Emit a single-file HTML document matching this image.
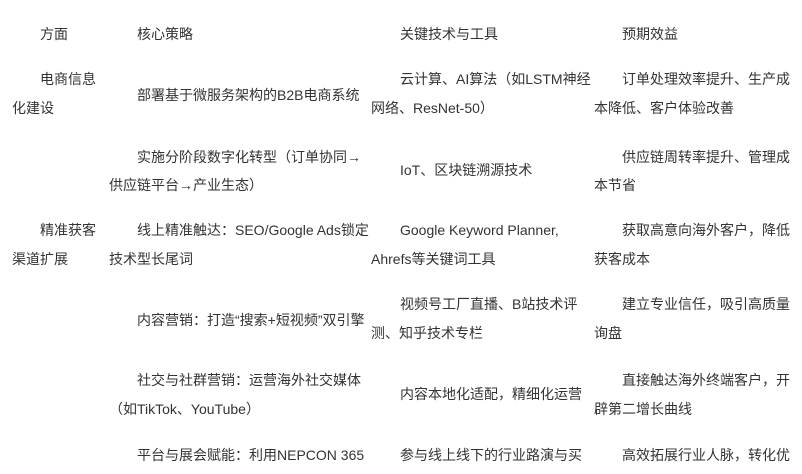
<!DOCTYPE html>
<html><head><meta charset="utf-8">
<style>
html,body{margin:0;padding:0;background:#fff;width:802px;height:474px;overflow:hidden;}
body{position:relative;font-family:"Liberation Sans","Noto Sans CJK SC",sans-serif;font-size:14px;color:#333;}
.t{position:absolute;white-space:nowrap;line-height:20px;}
</style></head><body>
<div class="t" style="left:40px;top:24px">方面</div>
<div class="t" style="left:137px;top:24px">核心策略</div>
<div class="t" style="left:400px;top:24px">关键技术与工具</div>
<div class="t" style="left:622px;top:24px">预期效益</div>

<div class="t" style="left:40px;top:69px">电商信息</div>
<div class="t" style="left:12px;top:98px">化建设</div>
<div class="t" style="left:137px;top:85px">部署基于微服务架构的B2B电商系统</div>
<div class="t" style="left:400px;top:69px">云计算、AI算法（如LSTM神经</div>
<div class="t" style="left:371px;top:98px">网络、ResNet-50）</div>
<div class="t" style="left:622px;top:69px">订单处理效率提升、生产成</div>
<div class="t" style="left:594px;top:98px">本降低、客户体验改善</div>

<div class="t" style="left:137px;top:147px">实施分阶段数字化转型（订单协同→</div>
<div class="t" style="left:109px;top:175px">供应链平台→产业生态）</div>
<div class="t" style="left:400px;top:160px">IoT、区块链溯源技术</div>
<div class="t" style="left:622px;top:147px">供应链周转率提升、管理成</div>
<div class="t" style="left:594px;top:175px">本节省</div>

<div class="t" style="left:40px;top:220px">精准获客</div>
<div class="t" style="left:12px;top:249px">渠道扩展</div>
<div class="t" style="left:137px;top:220px">线上精准触达：SEO/Google Ads锁定</div>
<div class="t" style="left:109px;top:249px">技术型长尾词</div>
<div class="t" style="left:400px;top:220px">Google Keyword Planner,</div>
<div class="t" style="left:371px;top:249px">Ahrefs等关键词工具</div>
<div class="t" style="left:622px;top:220px">获取高意向海外客户，降低</div>
<div class="t" style="left:594px;top:249px">获客成本</div>

<div class="t" style="left:137px;top:310px">内容营销：打造“搜索+短视频”双引擎</div>
<div class="t" style="left:400px;top:294px">视频号工厂直播、B站技术评</div>
<div class="t" style="left:371px;top:323px">测、知乎技术专栏</div>
<div class="t" style="left:622px;top:294px">建立专业信任，吸引高质量</div>
<div class="t" style="left:594px;top:323px">询盘</div>

<div class="t" style="left:137px;top:370px">社交与社群营销：运营海外社交媒体</div>
<div class="t" style="left:109px;top:399px">（如TikTok、YouTube）</div>
<div class="t" style="left:400px;top:384px">内容本地化适配，精细化运营</div>
<div class="t" style="left:622px;top:370px">直接触达海外终端客户，开</div>
<div class="t" style="left:594px;top:399px">辟第二增长曲线</div>

<div class="t" style="left:137px;top:445px">平台与展会赋能：利用NEPCON 365</div>
<div class="t" style="left:400px;top:445px">参与线上线下的行业路演与买</div>
<div class="t" style="left:622px;top:445px">高效拓展行业人脉，转化优</div>
</body></html>
